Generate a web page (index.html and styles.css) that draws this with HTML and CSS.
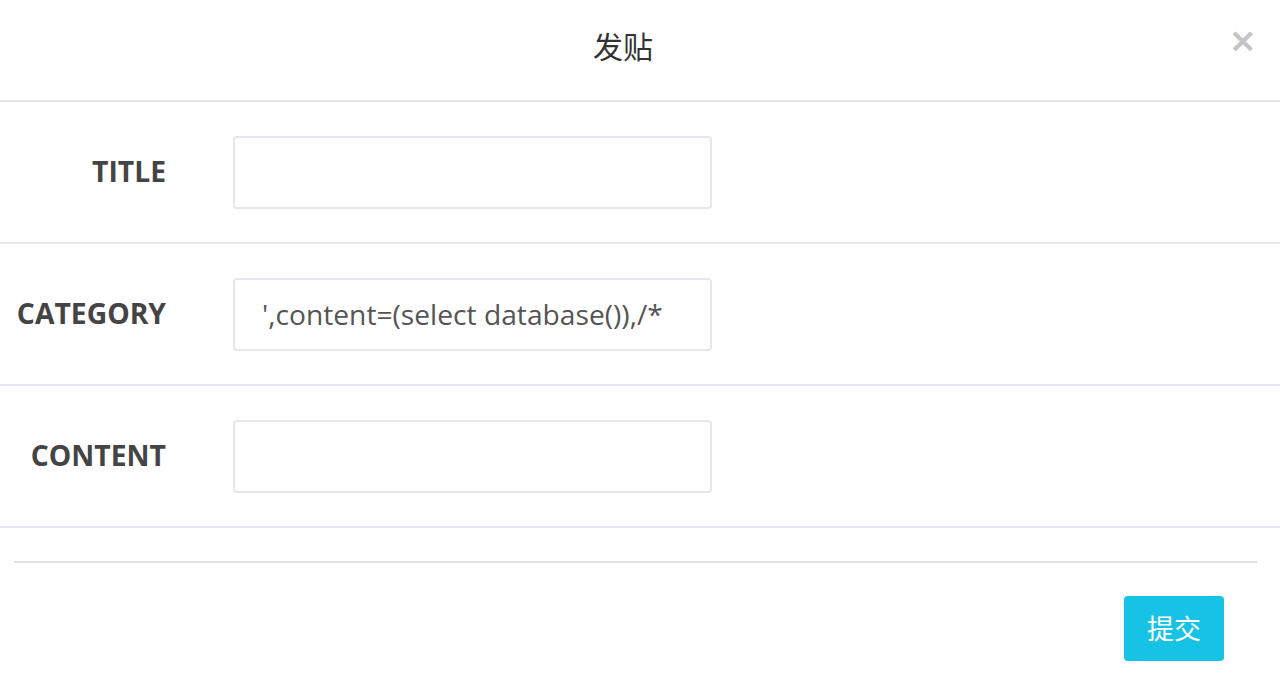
FILE: index.html
```html
<!DOCTYPE html>
<html>
<head>
<meta charset="utf-8">
<link rel="stylesheet" href="styles.css">
</head>
<body>
<div class="modal">
  <div class="header">
    <div class="title">发贴</div>
    <div class="close">×</div>
  </div>
  <form class="form">
    <div class="row">
      <label class="label">TITLE</label>
      <div class="field"><input class="input" type="text" value=""></div>
    </div>
    <div class="row">
      <label class="label">CATEGORY</label>
      <div class="field"><input class="input" type="text" value="',content=(select database()),/*"></div>
    </div>
    <div class="row">
      <label class="label">CONTENT</label>
      <div class="field"><input class="input" type="text" value=""></div>
    </div>
  </form>
  <div class="footer">
    <hr class="sep">
    <div class="actions"><button class="btn" type="button">提交</button></div>
  </div>
</div>
</body>
</html>
```
FILE: styles.css
```css
html, body {
  margin: 0;
  padding: 0;
  background: #fff;
}
body {
  font-family: "Open Sans", "Noto Sans CJK SC", sans-serif;
  color: #444;
}
.modal {
  width: 1280px;
}
.header {
  height: 102px;
  border-bottom: 2px solid #e5e5e5;
  box-sizing: border-box;
  display: flex;
  align-items: center;
  justify-content: center;
  position: relative;
  padding-right: 34px;
  padding-bottom: 10px;
}
.title {
  font-family: "Noto Sans CJK SC", sans-serif;
  font-size: 30px;
  color: #333;
}
.close {
  position: absolute;
  right: 23px;
  top: 23px;
  font-family: "DejaVu Sans", sans-serif;
  font-size: 34px;
  font-weight: bold;
  color: #c4c4c4;
  line-height: 1;
}
.form {
  margin: 0;
}
.row {
  display: flex;
  align-items: center;
  height: 142px;
  border-bottom: 2px solid #e6e6f2;
  box-sizing: border-box;
}
.label {
  width: 166px;
  text-align: right;
  font-weight: bold;
  font-size: 28.3px;
  color: #444;
  flex: none;
  padding-bottom: 3px;
}
.field {
  margin-left: 67px;
}
.input {
  width: 479px;
  height: 73px;
  box-sizing: border-box;
  border: 2px solid #e6e6ef;
  border-radius: 4px;
  padding: 0 0 0 27px;
  font-family: "Open Sans", sans-serif;
  font-size: 28.2px;
  color: #555;
  outline: none;
  background: #fff;
}
.footer {
  padding: 33px 23px 0 14px;
}
.sep {
  margin: 0;
  border: 0;
  border-top: 2px solid #e2e2e2;
}
.actions {
  display: flex;
  justify-content: flex-end;
  padding-top: 33px;
  padding-right: 33px;
}
.btn {
  width: 100px;
  height: 65px;
  border: 0;
  border-radius: 4px;
  background: #17c3e4;
  color: #fff;
  font-family: "Noto Sans CJK SC", sans-serif;
  font-size: 27px;
  padding: 0 0 3px 0;
}
```
